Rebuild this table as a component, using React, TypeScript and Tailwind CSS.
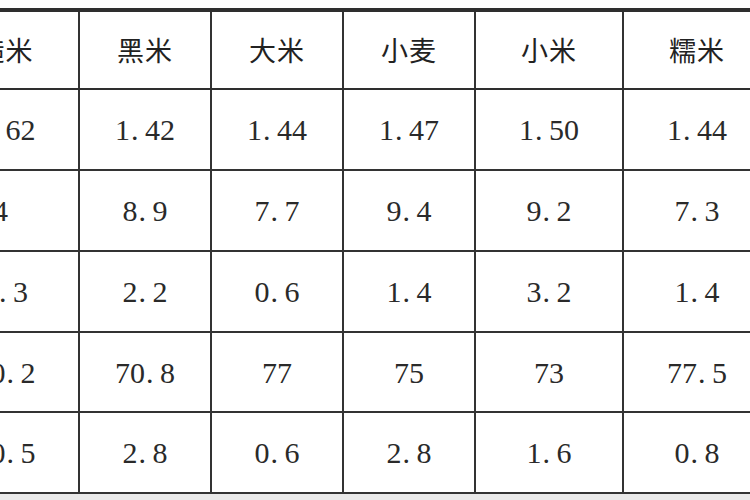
import React from "react";

const widths = ["w-[147px]", "w-[132px]", "w-[132px]", "w-[132px]", "w-[148px]", "w-[148px]"];
const heights = ["h-[81px]", "h-[81px]", "h-[81px]", "h-[80px]", "h-[81px]"];

const header = ["糙米", "黑米", "大米", "小麦", "小米", "糯米"];
const rows: string[][] = [
  ["1.62", "1.42", "1.44", "1.47", "1.50", "1.44"],
  ["7.4", "8.9", "7.7", "9.4", "9.2", "7.3"],
  ["1.3", "2.2", "0.6", "1.4", "3.2", "1.4"],
  ["70.2", "70.8", "77", "75", "73", "77.5"],
  ["10.5", "2.8", "0.6", "2.8", "1.6", "0.8"],
];

function Num({ v }: { v: string }) {
  const parts = v.split(".");
  return (
    <span className="inline-flex items-baseline">
      <span>{parts[0]}</span>
      {parts.length > 1 && (
        <>
          <span className="inline-block w-[15px] text-left pl-[1px]">.</span>
          <span>{parts[1]}</span>
        </>
      )}
    </span>
  );
}

export default function App() {
  return (
    <div className="w-[750px] h-[500px] overflow-hidden bg-white flex flex-col">
      <div className="h-[8px] shrink-0 bg-white" />
      <div className="ml-[-67px] flex flex-col w-[838px] shrink-0">
        <div className="flex h-[82px] border-t-[4px] border-b-2 border-[#2e2e2e]">
          {header.map((h, i) => (
            <div
              key={i}
              className={`${widths[i]} shrink-0 border-r-2 border-[#333] flex items-center justify-center text-[27px] text-[#222] tracking-[1px]`}
              style={{ fontFamily: '"Noto Sans CJK SC", "Noto Sans", sans-serif' }}
            >
              {h}
            </div>
          ))}
        </div>
        {rows.map((r, ri) => (
          <div key={ri} className={`flex ${heights[ri]} border-b-2 border-[#333]`}>
            {r.map((v, ci) => (
              <div
                key={ci}
                className={`${widths[ci]} shrink-0 border-r-2 border-[#333] flex items-center justify-center text-[30px] text-[#2a2a2a] ${ri === 1 && ci === 0 ? "pr-[40px]" : ""}`}
                style={{ fontFamily: '"Liberation Serif", "DejaVu Serif", serif' }}
              >
                <Num v={v} />
              </div>
            ))}
          </div>
        ))}
      </div>
      <div className="flex-1 bg-[#e9e9e9]" />
    </div>
  );
}
